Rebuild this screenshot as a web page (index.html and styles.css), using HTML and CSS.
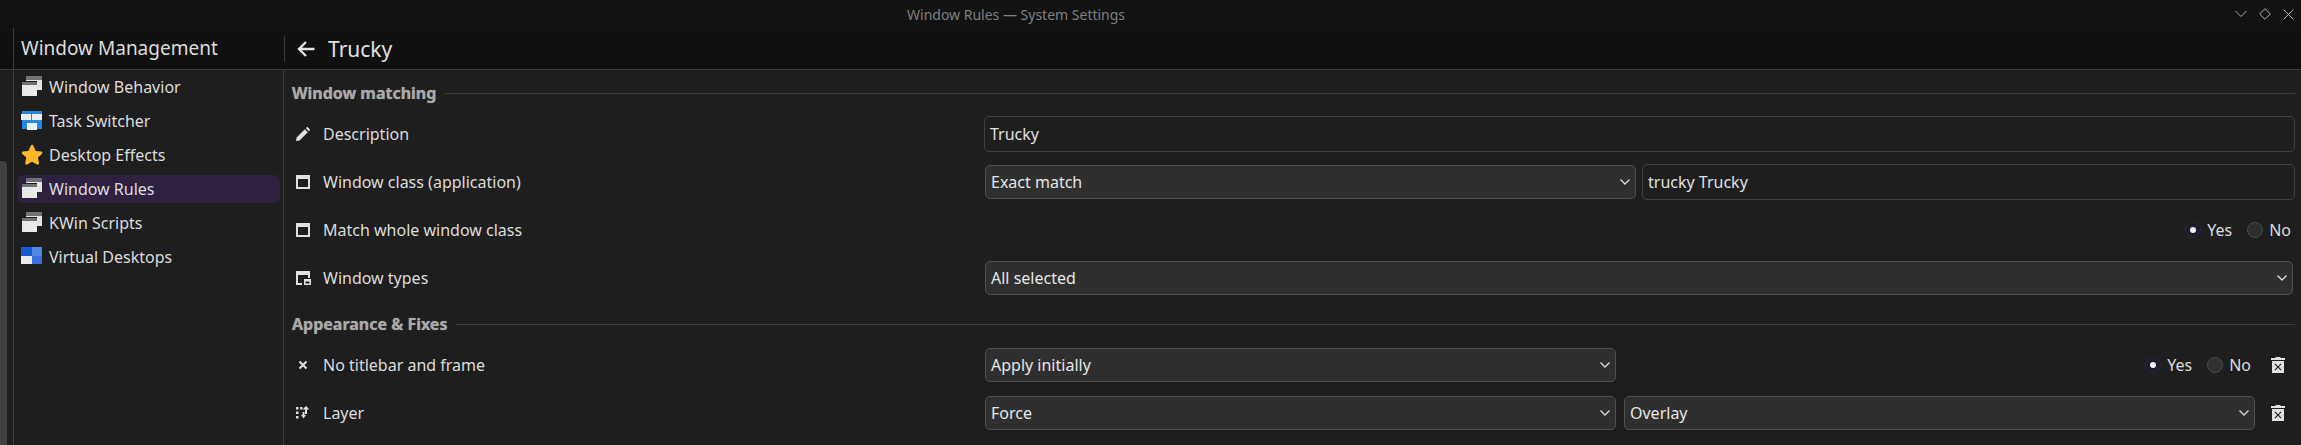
FILE: index.html
```html
<!DOCTYPE html>
<html lang="en">
<head>
<meta charset="utf-8">
<title>Window Rules — System Settings</title>
<link rel="stylesheet" href="styles.css">
</head>
<body>
<svg class="defs" width="0" height="0">
  <defs>
    <symbol id="win-stack" viewBox="0 0 22 22">
      <rect x="5" y="0" width="16" height="14" fill="#e4e4e4"/>
      <rect x="5" y="0" width="16" height="4" fill="#6e7277"/>
      <rect x="1" y="5" width="15" height="15" fill="#1e1e1e"/>
      <rect x="1" y="6" width="15" height="14" fill="#e9e9e9"/>
      <rect x="1" y="6" width="15" height="3" fill="#6e7277"/>
    </symbol>
    <symbol id="win" viewBox="0 0 14 14">
      <path fill="#e0e0e0" d="M0 0h14v14H0zM2 4v8h10V4z" fill-rule="evenodd"/>
    </symbol>
    <symbol id="trash" viewBox="0 0 14 16">
      <path fill="#e2e2e2" fill-rule="evenodd" d="M4.500 0h5v1H14v2H0V1h4.500zM1 4h12v12H1zM4.300 6.500 3.500 7.300 6.200 10 3.500 12.700l.8.800L7 10.800l2.700 2.700.8-.8L7.800 10l2.700-2.700-.8-.8L7 9.200z"/>
    </symbol>
    <symbol id="chev" viewBox="0 0 10 6">
      <path d="M.5.500 5 5 9.500.5" fill="none" stroke="#dcdcdc" stroke-width="1.300"/>
    </symbol>
  </defs>
</svg>
<div class="chrome">
  <div class="titlebar">
    <div class="title">Window Rules — System Settings</div>
    <div class="wm-buttons">
      <svg width="12" height="8" viewBox="0 0 12 8"><path d="M.5 1 6 6.500 11.500 1" fill="none" stroke="#a8a8a8"/></svg>
      <svg width="12" height="12" viewBox="0 0 12 12"><path d="M6 .7 11.300 6 6 11.300.7 6z" fill="none" stroke="#b4b4b4"/></svg>
      <svg width="11" height="11" viewBox="0 0 11 11"><path d="M.7.700l9.600 9.600M10.300.7.700 10.300" fill="none" stroke="#b0b0b0"/></svg>
    </div>
  </div>
  <div class="toolbar">
    <div class="strip"></div>
    <div class="tool-side">Window Management</div>
    <div class="tool-main">
      <svg class="back" width="18" height="16" viewBox="0 0 18 16"><path d="M17.500 8H2.500M9 1 2 8l7 7" fill="none" stroke="#e4e4e4" stroke-width="2.400"/></svg>
      <span class="page-title">Trucky</span>
    </div>
  </div>
</div>
<div class="content">
  <div class="strip"><div class="scrollbar"></div></div>
  <nav class="side">
    <div class="item"><svg class="nav-icon"><use href="#win-stack"/></svg>Window Behavior</div>
    <div class="item"><svg class="nav-icon" viewBox="0 0 22 20"><rect x="1" y="0" width="20" height="18" fill="#2489e6"/><rect x="0" y="3" width="10" height="6" fill="#eee"/><rect x="11" y="3" width="10" height="6" fill="#eee"/><rect x="6" y="12" width="10" height="7" fill="#eee"/></svg>Task Switcher</div>
    <div class="item"><svg class="nav-icon" viewBox="0 0 22 22"><path d="M11 .8c.7 0 1.100.5 1.400 1.100l2.300 5 5.400.7c1.300.2 1.700 1.500.8 2.300l-4 3.700 1.100 5.400c.2 1.200-1 2-2 1.500L11 17.800l-4.800 2.700c-1 .5-2.200-.3-2-1.500l1.100-5.400-4-3.700C.4 9.100.8 7.800 2 7.600l5.400-.7 2.300-5c.3-.6.700-1.100 1.300-1.100z" fill="#fdb827"/></svg>Desktop Effects</div>
    <div class="item selected"><svg class="nav-icon"><use href="#win-stack"/></svg>Window Rules</div>
    <div class="item"><svg class="nav-icon"><use href="#win-stack"/></svg>KWin Scripts</div>
    <div class="item"><svg class="nav-icon" viewBox="0 0 22 22"><rect x="11" y="1" width="10" height="9" fill="#5286e4"/><rect x="0" y="1" width="11" height="9" fill="#1b5ad4"/><rect x="11" y="10" width="10" height="8" fill="#3a6fdc"/><rect x="0" y="10" width="11" height="8" fill="#ececec"/></svg>Virtual Desktops</div>
  </nav>
  <main class="main">
    <div class="section"><span>Window matching</span><i></i></div>

    <div class="row">
      <div class="label"><svg class="row-icon" viewBox="0 0 14 14"><path fill="#e0e0e0" d="M0 14l.6-3.600L8.800 2.200l3 3L3.600 13.400zM9.800 1.200 10.800.2c.3-.3.700-.3 1 0l2 2c.3.300.3.700 0 1l-1 1z"/></svg>Description</div>
      <div class="field"><div class="input">Trucky</div></div>
    </div>

    <div class="row">
      <div class="label"><svg class="row-icon"><use href="#win"/></svg>Window class (application)</div>
      <div class="field">
        <div class="combo w-class">Exact match<svg class="chev"><use href="#chev"/></svg></div>
        <div class="input grow">trucky Trucky</div>
      </div>
    </div>

    <div class="row">
      <div class="label"><svg class="row-icon"><use href="#win"/></svg>Match whole window class</div>
      <div class="field end">
        <div class="radios">
          <span class="radio on"></span><span class="opt">Yes</span>
          <span class="radio"></span><span class="opt">No</span>
        </div>
      </div>
    </div>

    <div class="row short">
      <div class="label"><svg class="row-icon wide" viewBox="0 0 15 14"><path fill="#e0e0e0" d="M0 0h14v7h-2V4H2v8h4v2H0z"/><path fill="#e0e0e0" fill-rule="evenodd" d="M8 8h7v6H8zm1.500 2.500v2h4v-2z"/></svg>Window types</div>
      <div class="field"><div class="combo grow inset">All selected<svg class="chev"><use href="#chev"/></svg></div></div>
    </div>

    <div class="section"><span>Appearance &amp; Fixes</span><i></i></div>

    <div class="row">
      <div class="label"><svg class="row-icon" viewBox="0 0 14 14"><path d="M3.500 3.500l7 7M10.500 3.500l-7 7" stroke="#e0e0e0" stroke-width="2" fill="none"/></svg>No titlebar and frame</div>
      <div class="field">
        <div class="combo w-apply">Apply initially<svg class="chev"><use href="#chev"/></svg></div>
        <div class="radios push">
          <span class="radio on"></span><span class="opt">Yes</span>
          <span class="radio"></span><span class="opt">No</span>
        </div>
        <svg class="trash"><use href="#trash"/></svg>
      </div>
    </div>

    <div class="row">
      <div class="label"><svg class="row-icon" viewBox="0 0 14 14"><g fill="#e0e0e0"><rect x="0" y="1" width="2.500" height="2.500"/><rect x="4" y="1" width="2.500" height="2.500"/><rect x="0" y="5.500" width="2.500" height="2.500"/><rect x="0" y="10" width="2.500" height="2.500"/><path d="M10 0l3.500 3.500H11V8H9V3.500H6.500zM5 9h1.500V6h2v3H10l-2.500 3.500z"/></g></svg>Layer</div>
      <div class="field">
        <div class="combo w-apply">Force<svg class="chev"><use href="#chev"/></svg></div>
        <div class="combo grow overlay">Overlay<svg class="chev"><use href="#chev"/></svg></div>
        <svg class="trash"><use href="#trash"/></svg>
      </div>
    </div>
  </main>
</div>
</body>
</html>
```
FILE: styles.css
```css
* { box-sizing: border-box; }
html, body { margin: 0; height: 100%; }
body {
  width: 2301px;
  height: 445px;
  overflow: hidden;
  background: #1e1e1e;
  color: #dcdcdc;
  font: 16px/22px "Noto Sans", sans-serif;
  display: flex;
  flex-direction: column;
}
.defs { position: absolute; }

.chrome {
  height: 70px;
  flex: none;
  background: linear-gradient(#131313, #0f0f0f);
  border-bottom: 1px solid #3c3c3c;
}
.titlebar {
  height: 28px;
  display: flex;
  align-items: center;
  padding: 1px 7px 0 907px;
}
.title { font-size: 14px; color: #7f7f7f; flex: 1; }
.wm-buttons { display: flex; align-items: center; gap: 12px; margin-top: -1px; }
.toolbar { height: 41px; display: flex; }
.strip { width: 13px; flex: none; }
.tool-side {
  width: 271px;
  flex: none;
  border-left: 1px solid #3c3c3c;
  padding-left: 7px;
  font-size: 19px;
  line-height: 40px;
  color: #dcdcdc;
}
.tool-main { flex: 1; display: flex; align-items: center; height: 26px; margin-top: 8px; border-left: 1px solid #3c3c3c; padding-left: 12px; }
.page-title { font-size: 21px; margin-left: 13px; color: #e0e0e0; }

.content { flex: 1; display: flex; min-height: 0; }
.content .strip { padding-top: 91px; }
.scrollbar { width: 7px; height: 100%; background: #404040; border-radius: 0 4px 0 0; }

.side {
  width: 271px;
  flex: none;
  border-left: 1px solid #3c3c3c;
  border-right: 1px solid #3c3c3c;
  padding: 3px 3px 0;
  display: flex;
  flex-direction: column;
  gap: 6px;
}
.item {
  height: 28px;
  display: flex;
  align-items: center;
  padding-left: 4px;
  border-radius: 6px;
}
.item.selected { background: #2e2140; }
.nav-icon { width: 22px; height: 22px; margin-right: 6px; flex: none; }

.main { flex: 1; padding-left: 8px; padding-right: 6px; }
.section {
  height: 40px;
  padding-top: 6px;
  display: flex;
  align-items: center;
  gap: 9px;
  font-weight: 700;
  color: #aaaaaa;
  text-shadow: 0 0 1px #8a8a8a;
}
.section i { flex: 1; height: 1px; background: #3c3c3c; }
.row { height: 48px; display: flex; align-items: center; }
.row.short { height: 47px; }
.label {
  width: 692px;
  flex: none;
  display: flex;
  align-items: center;
  padding-left: 4px;
}
.row-icon { width: 14px; height: 14px; margin-right: 13px; flex: none; }
.row-icon.wide { width: 15px; margin-right: 12px; }
.field { flex: 1; display: flex; align-items: center; gap: 6px; min-width: 0; }
.field.end { justify-content: flex-end; }
.grow { flex: 1; min-width: 0; }
.input {
  height: 36px;
  flex: 1;
  border: 1px solid #404040;
  border-radius: 5px;
  padding: 0 5px;
  display: flex;
  align-items: center;
  color: #e0e0e0;
}
.combo {
  height: 34px;
  background: #2f2f2f;
  border: 1px solid #515151;
  border-radius: 5px;
  margin-left: 1px;
  padding: 0 5px 0 5px;
  display: flex;
  align-items: center;
  justify-content: space-between;
  color: #e6e6e6;
}
.w-class { width: 651px; flex: none; }
.w-apply { width: 631px; flex: none; }
.inset { margin-right: 2px; }
.overlay { margin-left: 2px; }
.chev { width: 10px; height: 6px; flex: none; }
.radios { display: flex; align-items: center; margin-right: 4px; }
.push { margin-left: auto; }
.radio {
  width: 16px;
  height: 16px;
  border-radius: 50%;
  background: #2f2f2f;
  border: 1px solid #4c4c4c;
  margin-right: 6px;
  display: flex;
  align-items: center;
  justify-content: center;
}
.radio.on { background: #1f1a2c; border-color: #2d2440; }
.radio.on::after { content: ""; width: 6px; height: 6px; border-radius: 50%; background: #f2f2f2; }
.opt { margin-right: 15px; }
.opt:last-child { margin-right: 0; }
.trash { width: 14px; height: 16px; flex: none; margin: 0 10px 0 10px; }
```
